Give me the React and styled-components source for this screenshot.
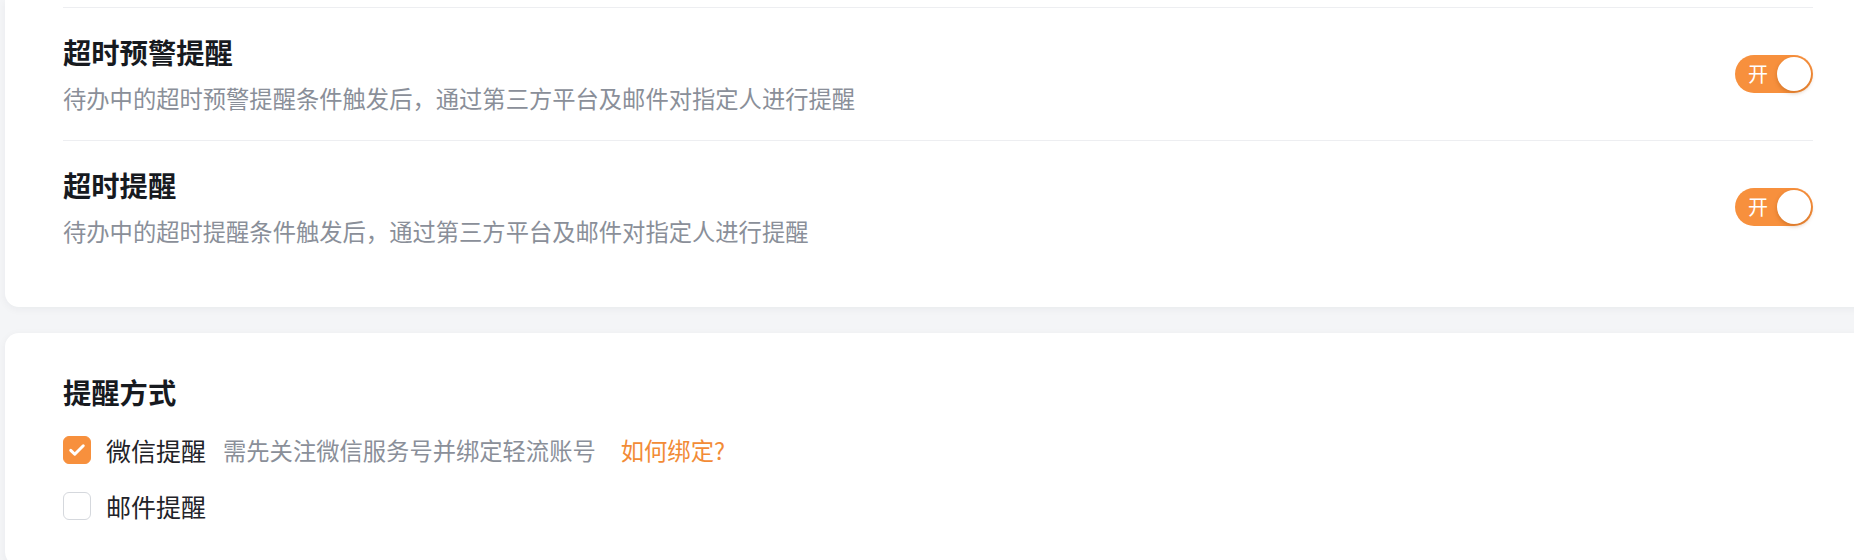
import styled, { createGlobalStyle } from 'styled-components'

const GlobalStyle = createGlobalStyle`
	html, body {
		margin: 0;
		padding: 0;
		background: #f4f5f7;
		font-family: "Noto Sans CJK SC", "Noto Sans", "Liberation Sans", sans-serif;
	}
`

const Page = styled.div`
	width: 1854px;
	height: 560px;
	overflow: hidden;
	padding-left: 5px;
	box-sizing: border-box;
`

const Card = styled.section`
	background: #fff;
	margin-right: -17px;
	padding: ${(p) => (p.$cutTop ? '7px 58px 34px' : '39px 58px 40px')};
	margin-top: ${(p) => (p.$cutTop ? '0' : '26px')};
	border-radius: ${(p) => (p.$cutTop ? '0 0 14px 14px' : '14px')};
	box-shadow: 0 2px 8px rgba(20, 30, 50, 0.05);
`

const Row = styled.div`
	display: flex;
	align-items: center;
	justify-content: space-between;
	border-top: 1px solid #edeef1;
	padding: 24px 0;
`

const Title = styled.h3`
	margin: 0;
	font-size: 28.3px;
	line-height: 40px;
	font-weight: 700;
	color: #171a1f;
`

const Desc = styled.p`
	margin: 8px 0 0;
	font-size: 23.3px;
	line-height: 36px;
	color: #8a8f99;
`

const Switch = styled.div`
	position: relative;
	width: 78px;
	height: 38px;
	border-radius: 19px;
	background: #f7903d;
	flex-shrink: 0;
	display: flex;
	align-items: center;
	padding-left: 13px;
	box-sizing: border-box;
	color: #fff;
	font-size: 20px;
	line-height: 1;
	&::after {
		content: '';
		position: absolute;
		top: 2px;
		right: 2px;
		width: 34px;
		height: 34px;
		border-radius: 50%;
		background: #fff;
		box-shadow: 0 2px 4px rgba(150, 70, 0, 0.35);
	}
`

const Options = styled.div`
	display: flex;
	flex-direction: column;
	gap: 16px;
	margin-top: 18px;
`

const Option = styled.label`
	display: flex;
	align-items: center;
	height: 40px;
`

const Box = styled.span`
	width: 28px;
	height: 28px;
	box-sizing: border-box;
	border-radius: 6px;
	display: flex;
	align-items: center;
	justify-content: center;
	margin-right: 15px;
	background: ${(p) => (p.$checked ? '#f7903d' : '#fff')};
	border: 1px solid ${(p) => (p.$checked ? '#f7903d' : '#d5d8dd')};
`

const Label = styled.span`
	font-size: 25px;
	color: #1f2329;
`

const Hint = styled.span`
	font-size: 23.3px;
	color: #8a8f99;
	margin-left: 17px;
`

const Link = styled.a`
	font-size: 23.3px;
	color: #f28b36;
	margin-left: 25px;
	cursor: pointer;
`

const Check = () => (
	<svg width="20" height="20" viewBox="0 0 16 16" fill="none">
		<path d="M3 8.3l3.2 3.1 6.8-6.8" stroke="#fff" strokeWidth="2.4" strokeLinecap="round" strokeLinejoin="round" />
	</svg>
)

const App = () => {
	const rules = [
		{ title: '超时预警提醒', desc: '待办中的超时预警提醒条件触发后，通过第三方平台及邮件对指定人进行提醒' },
		{ title: '超时提醒', desc: '待办中的超时提醒条件触发后，通过第三方平台及邮件对指定人进行提醒' }
	]
	return (
		<Page>
			<GlobalStyle />
			<Card $cutTop>
				{rules.map((r, i) => (
					<Row key={i}>
						<div>
							<Title>{r.title}</Title>
							<Desc>{r.desc}</Desc>
						</div>
						<Switch>开</Switch>
					</Row>
				))}
			</Card>
			<Card>
				<Title>提醒方式</Title>
				<Options>
					<Option>
						<Box $checked>
							<Check />
						</Box>
						<Label>微信提醒</Label>
						<Hint>需先关注微信服务号并绑定轻流账号</Hint>
						<Link>如何绑定?</Link>
					</Option>
					<Option>
						<Box />
						<Label>邮件提醒</Label>
					</Option>
				</Options>
			</Card>
		</Page>
	)
}

export default App
